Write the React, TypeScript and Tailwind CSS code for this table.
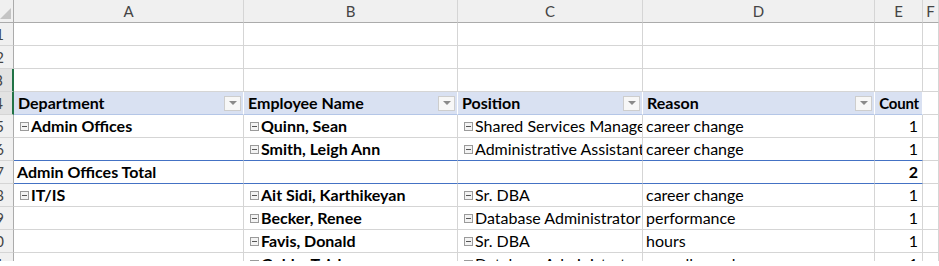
import React from "react";

type Cell = {
  text?: string;
  bold?: boolean;
  toggle?: boolean;
  right?: boolean;
};

type Row = {
  num: string;
  kind: "blank" | "head" | "data" | "total";
  cells?: Cell[];
  selected?: boolean;
  blueBottom?: boolean;
};

const rows: Row[] = [
  { num: "1", kind: "blank" },
  { num: "2", kind: "blank" },
  { num: "3", kind: "blank", selected: true },
  {
    num: "4",
    kind: "head",
    selected: true,
    cells: [{ text: "Department" }, { text: "Employee Name" }, { text: "Position" }, { text: "Reason" }, { text: "Count", right: true }],
  },
  {
    num: "5",
    kind: "data",
    cells: [
      { text: "Admin Offices", bold: true, toggle: true },
      { text: "Quinn, Sean", bold: true, toggle: true },
      { text: "Shared Services Manager", toggle: true },
      { text: "career change" },
      { text: "1", right: true },
    ],
  },
  {
    num: "6",
    kind: "data",
    blueBottom: true,
    cells: [
      {},
      { text: "Smith, Leigh Ann", bold: true, toggle: true },
      { text: "Administrative Assistant", toggle: true },
      { text: "career change" },
      { text: "1", right: true },
    ],
  },
  {
    num: "7",
    kind: "total",
    blueBottom: true,
    cells: [{ text: "Admin Offices Total", bold: true }, {}, {}, {}, { text: "2", bold: true, right: true }],
  },
  {
    num: "8",
    kind: "data",
    cells: [
      { text: "IT/IS", bold: true, toggle: true },
      { text: "Ait Sidi, Karthikeyan", bold: true, toggle: true },
      { text: "Sr. DBA", toggle: true },
      { text: "career change" },
      { text: "1", right: true },
    ],
  },
  {
    num: "9",
    kind: "data",
    cells: [
      {},
      { text: "Becker, Renee", bold: true, toggle: true },
      { text: "Database Administrator", toggle: true },
      { text: "performance" },
      { text: "1", right: true },
    ],
  },
  {
    num: "10",
    kind: "data",
    cells: [
      {},
      { text: "Favis, Donald", bold: true, toggle: true },
      { text: "Sr. DBA", toggle: true },
      { text: "hours" },
      { text: "1", right: true },
    ],
  },
  {
    num: "11",
    kind: "data",
    cells: [
      {},
      { text: "Goble, Taisha", bold: true, toggle: true },
      { text: "Database Administrator", toggle: true },
      { text: "no-call, no-show" },
      { text: "1", right: true },
    ],
  },
];

const letters = ["A", "B", "C", "D", "E", "F"];

function Toggle() {
  return (
    <span className="mr-[2px] flex h-[9px] w-[9px] shrink-0 items-center justify-center border border-[#9a9a9a] bg-[#f3f3f3]">
      <span className="h-px w-[5px] bg-[#555]" />
    </span>
  );
}

function DropButton() {
  return (
    <span className="ml-auto mr-[2px] flex h-[15px] w-[17px] shrink-0 items-center justify-center border border-[#cdcdcd] bg-[#f7f7f7]">
      <span className="h-0 w-0 border-x-[4px] border-t-[4px] border-x-transparent border-t-[#8a8a8a]" />
    </span>
  );
}

function RowHeader({ num, selected }: { num: string; selected?: boolean }) {
  return (
    <div
      className={`flex h-[23px] items-center justify-end overflow-hidden border-b border-[#d5d5d5] pr-[9px] text-[15px] text-[#444] ${
        selected ? "border-r-2 border-r-[#217346] bg-[#e2e2e2]" : "border-r border-r-[#ababab] bg-[#f0f0f0]"
      }`}
    >
      <span className="shrink-0 whitespace-nowrap">{num}</span>
    </div>
  );
}

export default function App() {
  return (
    <div className="h-[266px] w-[939px] overflow-hidden bg-white font-['Lato','Open_Sans',sans-serif] text-[16px] text-black">
      <div className="grid h-[261px] grid-cols-[14px_230px_214px_185px_232px_48px_16px] overflow-hidden">
        {/* corner */}
        <div className="relative h-[23px] border-b border-r border-[#ababab] bg-[#f0f0f0]">
          <span className="absolute bottom-[3px] right-[2px] h-0 w-0 border-b-[11px] border-l-[11px] border-b-[#c4c4c4] border-l-transparent" />
        </div>
        {letters.map((l) => (
          <div
            key={l}
            className="flex h-[23px] items-center justify-center border-b border-r border-b-[#ababab] border-r-[#d5d5d5] bg-[#f0f0f0] text-[15px] text-[#444]"
          >
            {l}
          </div>
        ))}

        {rows.map((row) => (
          <React.Fragment key={row.num}>
            <RowHeader num={row.num} selected={row.selected} />
            {[0, 1, 2, 3, 4].map((i) => {
              const cell = row.cells?.[i] ?? {};
              if (row.kind === "head") {
                return (
                  <div
                    key={i}
                    className="flex h-[23px] items-center overflow-hidden whitespace-nowrap border-b border-r border-b-[#b4c6e7] border-r-white bg-[#d9e1f2] pl-[4px] font-bold"
                  >
                    {cell.right ? (
                      <span className="ml-auto pr-[3px] text-[15px] tracking-[-0.2px]">{cell.text}</span>
                    ) : (
                      <span>{cell.text}</span>
                    )}
                    {!cell.right && <DropButton />}
                  </div>
                );
              }
              const bottom = row.blueBottom ? "border-b-[#4472c4]" : "border-b-[#d5d5d5]";
              return (
                <div
                  key={i}
                  className={`flex h-[23px] items-center overflow-hidden whitespace-nowrap border-b border-r border-r-[#d5d5d5] ${bottom} ${
                    cell.toggle ? "pl-[6px]" : "pl-[3px]"
                  } ${cell.bold ? "font-bold" : ""} ${cell.right ? "justify-end pr-[4px]" : ""}`}
                >
                  {cell.toggle && <Toggle />}
                  {cell.text}
                </div>
              );
            })}
            <div className="h-[23px] border-b border-r border-[#d5d5d5]" />
          </React.Fragment>
        ))}
      </div>
    </div>
  );
}
